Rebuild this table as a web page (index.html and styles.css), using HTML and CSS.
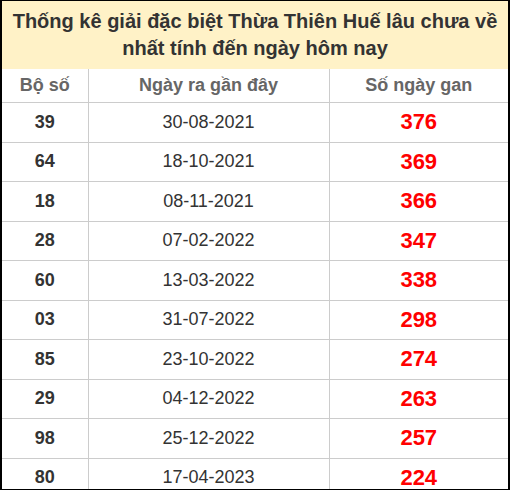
FILE: index.html
```html
<!DOCTYPE html>
<html lang="vi">
<head>
<meta charset="utf-8">
<link rel="stylesheet" href="styles.css">
</head>
<body>
<div class="frame">
  <div class="title">Thống kê giải đặc biệt Thừa Thiên Huế lâu chưa về<br>nhất tính đến ngày hôm nay</div>
  <table class="gan">
    <colgroup><col class="c1"><col class="c2"><col class="c3"></colgroup>
    <thead>
      <tr><th>Bộ số</th><th>Ngày ra gần đây</th><th>Số ngày gan</th></tr>
    </thead>
    <tbody>
      <tr><td class="num">39</td><td class="date">30-08-2021</td><td class="days">376</td></tr>
      <tr><td class="num">64</td><td class="date">18-10-2021</td><td class="days">369</td></tr>
      <tr><td class="num">18</td><td class="date">08-11-2021</td><td class="days">366</td></tr>
      <tr><td class="num">28</td><td class="date">07-02-2022</td><td class="days">347</td></tr>
      <tr><td class="num">60</td><td class="date">13-03-2022</td><td class="days">338</td></tr>
      <tr><td class="num">03</td><td class="date">31-07-2022</td><td class="days">298</td></tr>
      <tr><td class="num">85</td><td class="date">23-10-2022</td><td class="days">274</td></tr>
      <tr><td class="num">29</td><td class="date">04-12-2022</td><td class="days">263</td></tr>
      <tr><td class="num">98</td><td class="date">25-12-2022</td><td class="days">257</td></tr>
      <tr><td class="num">80</td><td class="date">17-04-2023</td><td class="days">224</td></tr>
    </tbody>
  </table>
</div>
</body>
</html>
```
FILE: styles.css
```css
html, body {
  margin: 0;
  padding: 0;
  background: #fff;
}
body {
  font-family: "Liberation Sans", Arial, sans-serif;
  color: #333;
}
.frame {
  box-sizing: border-box;
  width: 510px;
  height: 490px;
  overflow: hidden;
  border-left: 2px solid #000;
  border-right: 2px solid #000;
  border-top: 1px solid #000;
  border-bottom: 1px solid #000;
  background: #fff;
}
.title {
  height: 68px;
  box-sizing: border-box;
  padding-top: 7px;
  background: #fff2c7;
  text-align: center;
  font-weight: bold;
  font-size: 20px;
  line-height: 27px;
  color: #333;
}
.gan {
  width: 100%;
  border-collapse: collapse;
  table-layout: fixed;
}
.c1 { width: 86px; }
.c2 { width: 241px; }
.c3 { width: auto; }
.gan th, .gan td {
  border: 1px solid #ccc;
  text-align: center;
  padding: 0;
}
.gan tr > :first-child { border-left: none; }
.gan tr > :last-child { border-right: none; }
.gan thead tr > th { border-top: none; }
.gan th {
  height: 33px;
  font-size: 18px;
  font-weight: bold;
  color: #666;
}
.gan td {
  height: 38.5px;
  font-size: 18px;
}
.num { font-weight: bold; color: #333; }
.date { color: #333; }
.days {
  color: #ff0000;
  font-weight: bold;
  font-size: 22px !important;
}
```
